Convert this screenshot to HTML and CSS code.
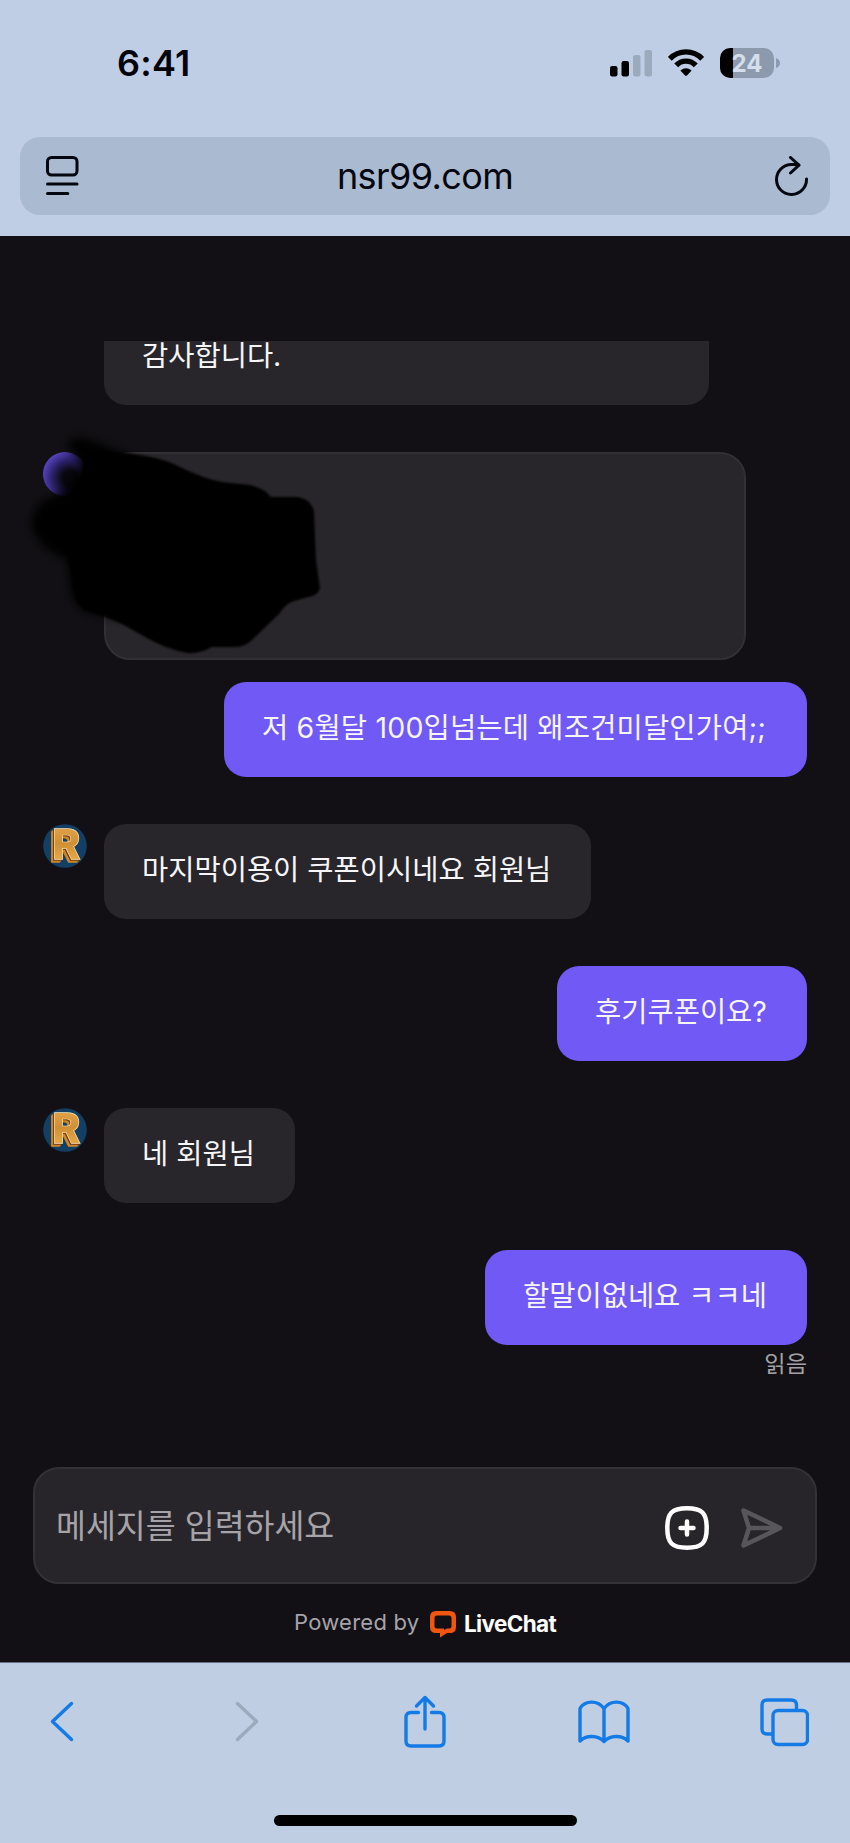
FILE: index.html
```html
<!DOCTYPE html>
<html lang="ko">
<head>
<meta charset="utf-8">
<title>nsr99.com</title>
<link rel="stylesheet" href="styles.css">
</head>
<body>
<div class="phone">
  <header class="top">
    <div class="status">
      <span class="time">6:41</span>
      <div class="indicators">
        <svg class="signal" width="42" height="27" viewBox="0 0 42 27">
          <rect x="0" y="16" width="7.5" height="10.5" rx="2.2"/>
          <rect x="11.5" y="11" width="7.5" height="15.5" rx="2.2"/>
          <rect class="dim" x="23" y="5" width="7.5" height="21.5" rx="2.2"/>
          <rect class="dim" x="34.5" y="0" width="7.5" height="26.5" rx="2.2"/>
        </svg>
        <svg class="wifi" width="36" height="28" viewBox="0 0 36 28">
          <path class="arc" d="M1.800 9.800 A22.5 22.5 0 0 1 34.200 9.800"/>
          <path class="arc" d="M8.2 16.400 A13.4 13.4 0 0 1 27.8 16.400"/>
          <path d="M12.4 21.5 Q18 16.8 23.6 21.5 L19 26.4 Q18 27.3 17 26.4 Z"/>
        </svg>
        <div class="battery"><span class="level">24</span></div>
        <svg class="tip" width="4" height="10" viewBox="0 0 4 10"><path d="M0 0 Q4 1.5 4 5 Q4 8.500 0 10Z"/></svg>
      </div>
    </div>
    <div class="urlbar">
      <svg width="34" height="40" viewBox="0 0 34 40" class="line">
        <rect x="1.500" y="1.500" width="29.500" height="17.500" rx="4"/>
        <path d="M1.500 28H31M1.500 37.500H21.800"/>
      </svg>
      <span class="url">nsr99.com</span>
      <svg width="34" height="40" viewBox="0 0 34 40" class="line">
        <path d="M31.500 23A15 15 0 1 1 16.500 8.500 H23"/>
        <path d="M15.500 1.500L24 9.200L15.500 17"/>
      </svg>
    </div>
  </header>

  <main class="chat">
    <div class="bubble agent clipped"><span>감사합니다.</span></div>
    <div class="hidden-row">
      <div class="avatar-purple"></div>
      <div class="card"></div>
      <svg class="scribble" width="330" height="250" viewBox="0 420 330 250">
        <defs>
          <filter id="soft" x="-20%" y="-20%" width="140%" height="140%"><feGaussianBlur stdDeviation="5"/></filter>
          <filter id="edge"><feGaussianBlur stdDeviation="1.300"/></filter>
        </defs>
        <path filter="url(#soft)" d="M66 443Q76 433 96 442L130 456L150 500L130 620L95 614Q74 612 71 592L67 560Q36 548 31 524Q34 502 46 500L62 492Q82 474 80 462Z"/>
        <path filter="url(#edge)" d="M86 450L122 453Q160 456 180 467Q205 479 222 482L250 485Q264 488 271 497H298Q312 500 314 512L316 560L320 588Q318 596 308 597L291 602Q284 606 279 614L252 640Q244 648 232 647H212Q200 654 187 653Q166 649 147 638L122 624L104 616L84 610Q73 600 72 580L68 555L60 505Q75 492 82 474Z"/>
      </svg>
    </div>
    <div class="row mine first"><div class="bubble user w1"><span>저 6월달 100입넘는데 왜조건미달인가여;;</span></div></div>
    <div class="row">
      <svg class="avatar" width="44" height="44" viewBox="0 0 44 44">
        <defs>
          <linearGradient id="gold" x1="0" y1="0" x2="0" y2="1">
            <stop offset="0" stop-color="#e9ad55"/><stop offset=".5" stop-color="#d08f34"/><stop offset="1" stop-color="#f0b952"/>
          </linearGradient>
        </defs>
        <circle cx="22" cy="22" r="21.800" fill="#123f63"/>
        <text class="letter" x="9.500" y="34.500">R</text>
      </svg>
      <div class="bubble agent w2"><span>마지막이용이 쿠폰이시네요 회원님</span></div>
    </div>
    <div class="row mine"><div class="bubble user w3"><span>후기쿠폰이요?</span></div></div>
    <div class="row">
      <svg class="avatar" width="44" height="44" viewBox="0 0 44 44">
        <circle cx="22" cy="22" r="21.800" fill="#123f63"/>
        <text class="letter" x="9.500" y="34.500">R</text>
      </svg>
      <div class="bubble agent w4"><span>네 회원님</span></div>
    </div>
    <div class="row mine"><div class="bubble user w5"><span>할말이없네요 ㅋㅋ네</span></div></div>
    <div class="read">읽음</div>

    <div class="composer">
      <span class="placeholder">메세지를 입력하세요</span>
      <svg class="plus" width="44" height="44" viewBox="0 0 44 44">
        <path d="M22 2.300C37 2.300 41.700 7 41.700 22S37 41.700 22 41.700 2.300 37 2.300 22 7 2.300 22 2.300Z"/>
        <path d="M22 15.500V28.500M15.500 22H28.500"/>
      </svg>
      <svg class="send" width="42" height="40" viewBox="0 0 42 40">
        <path d="M2.500 2.500L39 20L2.500 37.500L8 20ZM8 20H38"/>
      </svg>
    </div>
    <div class="powered">
      <span class="by">Powered by</span>
      <svg width="26" height="27" viewBox="0 0 26 27" class="lc">
        <path fill-rule="evenodd" d="M6 0H20Q26 0 26 6V16Q26 22 20 22H17L10 26.500V22H6Q0 22 0 16V6Q0 0 6 0ZM7 4.500Q4.500 4.500 4.500 7V15Q4.500 17.500 7 17.500H14V19L17 17.500H19Q21.500 17.500 21.500 15V7Q21.500 4.500 19 4.500Z"/>
      </svg>
      <span class="brand">LiveChat</span>
    </div>
  </main>

  <footer class="bottom">
    <nav class="tools">
      <svg width="24" height="42" viewBox="0 0 24 42"><path d="M21.500 2.500L2.500 20.500L21.500 38.500"/></svg>
      <svg class="off" width="24" height="42" viewBox="0 0 24 42"><path d="M2.500 2.500L21.500 20.500L2.500 38.500"/></svg>
      <svg class="share" width="42" height="54" viewBox="0 0 42 54"><path d="M14.500 17.500H7Q2 17.500 2 22.500V46Q2 51 7 51H35Q40 51 40 46V22.500Q40 17.500 35 17.500H27.500M21 34V2.500M12.500 11L21 2.500L29.500 11"/></svg>
      <svg width="52" height="44" viewBox="0 0 52 44"><path d="M26 8.500C20 0 7 0 2 8.500V41C8 35 20 35 26 41.500C32 35 44 35 50 41V8.500C45 0 32 0 26 8.500ZM26 8.500V41"/></svg>
      <svg width="49" height="49" viewBox="0 0 49 49"><rect x="13" y="12.500" width="34.500" height="34" rx="5"/><path d="M12.500 36H7Q2 36 2 31V7Q2 2 7 2H31Q36.500 2 36.500 7V12"/></svg>
    </nav>
    <div class="home"></div>
  </footer>
</div>
</body>
</html>
```
FILE: styles.css
```css
* { box-sizing: border-box; }
body { margin: 0; background: #121014; }
svg { display: block; flex: none; }
.phone {
  width: 850px; height: 1843px; overflow: hidden;
  display: flex; flex-direction: column;
  font-family: Inter, "Noto Sans CJK KR", sans-serif;
  white-space: nowrap;
}
.top { height: 236px; background: #bfcee4; padding: 0 20px; }
.status {
  height: 137px; padding: 48px 50px 0 97px;
  display: flex; justify-content: space-between; align-items: flex-start;
}
.time { font-size: 36px; line-height: 30px; font-weight: 600; letter-spacing: 0.2px; color: #02040a; }
.indicators { display: flex; align-items: flex-start; }
.signal { margin-top: 2px; }
.signal .dim { fill: #9baabd; }
.wifi { margin: 1px 16px 0; }
.wifi .arc { fill: none; stroke: #000; stroke-width: 5.400; }
.battery {
  width: 54px; height: 30px; border-radius: 10px;
  background: linear-gradient(90deg, #000 13px, #8d9aad 13px);
  text-align: center;
}
.level { display: block; font-size: 24px; line-height: 31px; font-weight: 700; color: #d4deec; }
.tip { fill: #8d9aad; margin: 10px 0 0 2px; }
.urlbar {
  height: 78px; border-radius: 20px; background: #a9bad1;
  padding: 0 21px 0 26px;
  display: flex; align-items: center; justify-content: space-between;
}
.url { font-size: 36px; line-height: 78px; letter-spacing: -0.6px; color: #04070f; margin-right: 5px; }
.line { fill: none; stroke: #04070f; stroke-width: 3; stroke-linecap: round; stroke-linejoin: round; }

.chat { height: 1426px; padding: 105px 0 0; background: #121014; }
.bubble { height: 95px; border-radius: 22px; padding: 25px 0 0 38px; }
.bubble span { display: block; font-size: 28.500px; line-height: 41px; font-weight: 400; color: #f6f5f8; }
.agent { background: #28262a; }
.user { background: #7059f5; }
.clipped { width: 605px; height: 64px; margin-left: 104px; border-radius: 0 0 22px 22px; padding-top: 0; }
.clipped span { line-height: 30px; }
.hidden-row { position: relative; display: flex; margin-top: 47px; padding-left: 43px; height: 208px; }
.avatar-purple {
  width: 44px; height: 44px; border-radius: 50%; margin-right: 17px;
  background: radial-gradient(circle at 62% 60%, #08070d 20%, #2b2168 48%, #5744c0 75%);
}
.card { width: 642px; height: 208px; border: 2px solid #323034; border-radius: 26px; background: #28262a; }
.scribble { position: absolute; left: 0; top: -32px; }
.row { display: flex; align-items: flex-start; margin-top: 47px; padding: 0 43px; }
.row.mine { justify-content: flex-end; }
.row.first { margin-top: 22px; }
.avatar { margin-right: 17px; overflow: visible; }
.letter {
  font: 900 43px Roboto, sans-serif;
  fill: url(#gold); stroke: #fbe5b5; stroke-width: 1.4; paint-order: stroke;
  filter: drop-shadow(-1px 1px 0 #79350f) drop-shadow(-2px 2px 0 #c98728);
}
.w1 { width: 583px; }
.w1 span { letter-spacing: 0.180px; }
.w2 { width: 487px; }
.w3 { width: 250px; }
.w4 { width: 191px; }
.w5 { width: 322px; }
.read { margin-top: 4px; padding-right: 43px; text-align: right; font-size: 23.200px; line-height: 30px; color: #a3a1a5; }
.composer {
  width: 784px; height: 117px; margin: 88px 0 0 33px;
  border: 2px solid #343136; border-radius: 26px; background: #28252a;
  padding: 0 32px 0 21px; display: flex; align-items: center;
}
.placeholder { flex: 1; padding-bottom: 4px; font-size: 32.500px; color: #a6a4a8; }
.plus { fill: none; stroke: #fff; stroke-width: 4.500; stroke-linecap: round; margin: 4px 32px 0 0; }
.send { fill: none; stroke: #59565b; stroke-width: 4.500; stroke-linecap: round; stroke-linejoin: round; margin-top: 4px; }
.powered { display: flex; align-items: center; margin-top: 18px; height: 40px; padding-left: 294px; }
.by { width: 136px; font-size: 22px; letter-spacing: .25px; color: #a6a4aa; }
.lc { fill: #f0560f; margin-top: 4px; }
.brand { margin: 3px 0 0 8px; font-size: 22.500px; font-weight: 700; letter-spacing: -0.65px; color: #fff; }

.bottom { height: 181px; background: #bfcee3; padding: 29px 0 0; border-top: 1px solid #65748a; }
.tools { width: 903px; height: 60px; margin-left: -28px; display: grid; grid-template-columns: repeat(5, 1fr); place-items: center; }
.tools svg { fill: none; stroke: #147be6; stroke-width: 3.400; stroke-linecap: round; stroke-linejoin: round; }
.tools svg.off { stroke: #9caabb; margin-left: 9px; }
.tools svg.share { margin-left: 3px; }
.home { width: 303px; height: 11px; border-radius: 6px; background: #000; margin: 63px 0 0 274px; }
```
